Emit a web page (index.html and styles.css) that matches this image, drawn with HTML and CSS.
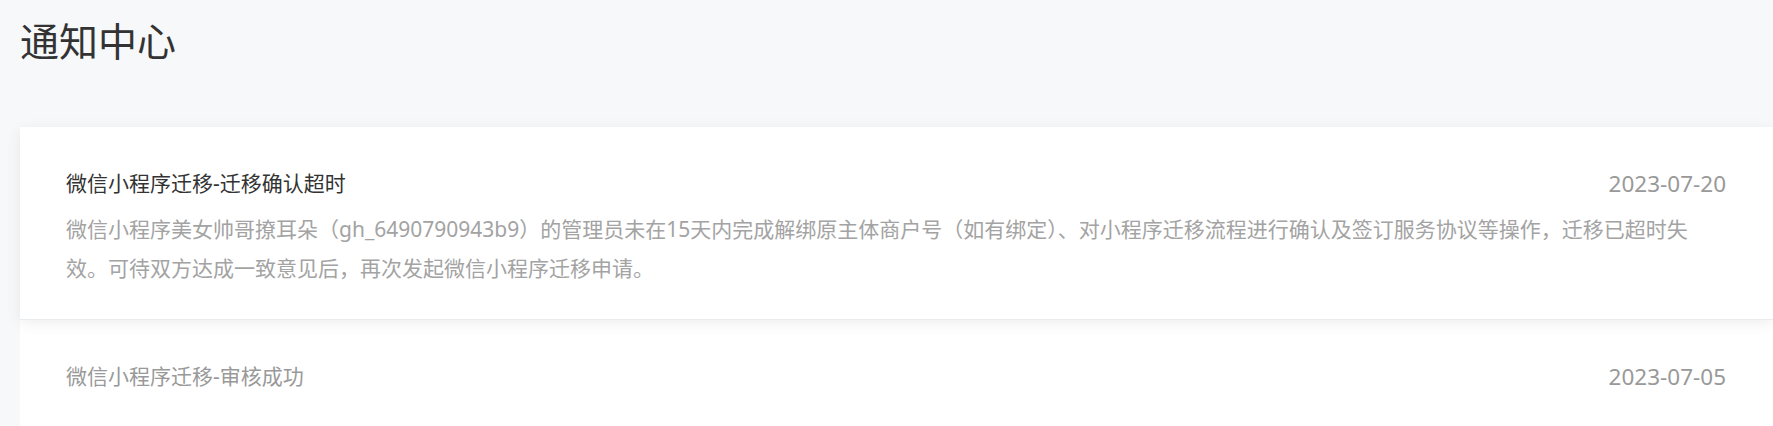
FILE: index.html
```html
<!DOCTYPE html>
<html lang="zh-CN">
<head>
  <meta charset="UTF-8" />
  <meta name="viewport" content="width=device-width, initial-scale=1.0" />
  <title>通知中心</title>
  <link rel="stylesheet" href="styles.css">
</head>
<body>
  <h1 class="page-title">通知中心</h1>
  <div class="notice-list">
    <div class="notice active">
      <div class="notice-head">
        <div class="notice-title">微信小程序迁移-迁移确认超时</div>
        <div class="notice-date">2023-07-20</div>
      </div>
      <div class="notice-text">
        微信小程序美女帅哥撩耳朵（gh_6490790943b9）的管理员未在15天内完成解绑原主体商户号（如有绑定）、对小程序迁移流程进行确认及签订服务协议等操作，迁移已超时失效。可待双方达成一致意见后，再次发起微信小程序迁移申请。
      </div>
    </div>
    <div class="notice">
      <div class="notice-head">
        <div class="notice-title">微信小程序迁移-审核成功</div>
        <div class="notice-date">2023-07-05</div>
      </div>
    </div>
  </div>
</body>
</html>
```

FILE: styles.css
```css
* {
  margin: 0;
  padding: 0;
  box-sizing: border-box;
}
html, body {
  height: 100%;
  overflow: hidden;
}
body {
  background: #f7f8fa;
  color: #333;
  font-family: "Noto Sans", "Noto Sans CJK SC", sans-serif;
  padding-left: 20px;
}
.page-title {
  font-size: 39px;
  font-weight: normal;
  line-height: 58px;
  color: #333;
  margin: 12px 0 57px;
}
.notice-list {
  display: flex;
  flex-direction: column;
}
.notice {
  background: #fff;
  padding: 37px 47px 31px 46px;
}
.notice.active {
  position: relative;
  z-index: 1;
  border-bottom: 1px solid #e9ebee;
  box-shadow: 0 3px 14px rgba(0, 0, 0, 0.07);
}
.notice-head {
  display: flex;
  justify-content: space-between;
  align-items: center;
  line-height: 39px;
}
.notice-title {
  font-size: 21px;
  color: #999;
}
.notice.active .notice-title {
  color: #333;
}
.notice-date {
  font-size: 22.5px;
  color: #999;
}
.notice-text {
  font-size: 21px;
  line-height: 39px;
  color: #a3a3a3;
  margin-top: 7px;
  padding-right: 10px;
}
```
